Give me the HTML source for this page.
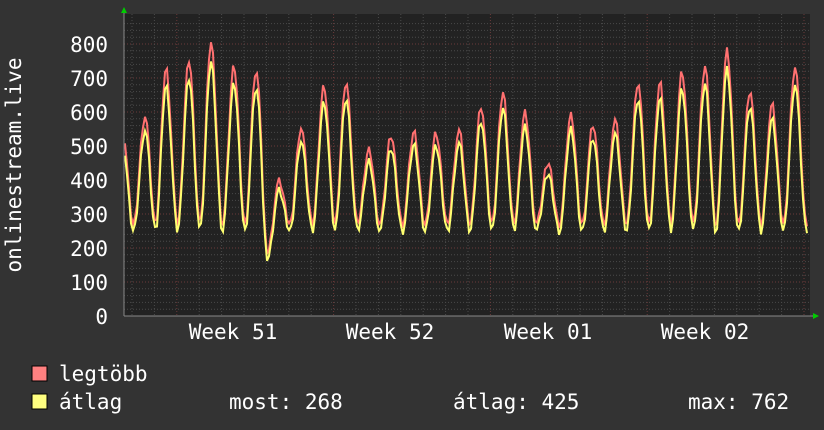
<!DOCTYPE html>
<html><head><meta charset="utf-8"><style>
html,body{margin:0;padding:0;background:#333;}
svg{display:block}
text{font-family:"DejaVu Sans Mono","Liberation Mono",monospace;font-size:21px;fill:#fff}
</style></head><body>
<svg id="s" width="824" height="430" xmlns="http://www.w3.org/2000/svg">
<rect width="824" height="430" fill="#333"/>
<rect x="124" y="14" width="686" height="302" fill="#222"/>
<g id="grid"></g>
<path id="red" fill="none" stroke="#ff7070" stroke-width="2"/>
<path id="yel" fill="none" stroke="#ffff70" stroke-width="2"/>
<line x1="124" y1="316" x2="816" y2="316" stroke="#888" stroke-width="1"/>
<line x1="124" y1="316" x2="124" y2="10" stroke="#888" stroke-width="1"/>
<polygon points="121,13 127,13 124,7" fill="#0c0"/>
<polygon points="813,313 813,319 819,316" fill="#0c0"/>
<g text-anchor="end">
<text x="108" y="52">800</text><text x="108" y="86">700</text><text x="108" y="120">600</text>
<text x="108" y="154">500</text><text x="108" y="188">400</text><text x="108" y="222">300</text>
<text x="108" y="256">200</text><text x="108" y="290">100</text><text x="108" y="324">0</text>
</g>
<text transform="translate(21,165) rotate(-90)" text-anchor="middle">onlinestream.live</text>
<g text-anchor="middle">
<text x="233" y="339">Week 51</text><text x="390" y="339">Week 52</text>
<text x="548" y="339">Week 01</text><text x="705" y="339">Week 02</text>
</g>
<rect x="32" y="366" width="15" height="15" fill="#ff8080" stroke="#000"/>
<rect x="32" y="394" width="15" height="15" fill="#ffff80" stroke="#000"/>
<text x="59" y="381">legtöbb</text>
<text x="59" y="409">átlag</text>
<text x="229" y="409">most: 268</text>
<text x="453" y="409">átlag: 425</text>
<text x="688" y="409">max: 762</text>
</svg>
<script>
(function(){
var g=document.getElementById('grid'),ns='http://www.w3.org/2000/svg',h='';
for(var v=20;v<=860;v+=20){var y=316-v*0.34;if(y<14)break;
 h+='<line x1="124" x2="810" y1="'+y+'" y2="'+y+'" stroke="'+(v%100==0?'#6a3a3a':'#4a4a4a')+'" stroke-dasharray="1,2" stroke-width="1"/>';}
for(var x=132;x<810;x+=22.4){var major=Math.abs(((x-132)/22.4)%7-2)<0.01;
 h+='<line y1="14" y2="316" x1="'+x.toFixed(1)+'" x2="'+x.toFixed(1)+'" stroke="'+(major?'#6a3a3a':'#4a4a4a')+'" stroke-dasharray="1,2" stroke-width="1"/>';}
g.innerHTML=h;
var pk=[[122,560],[145,590],[166,730],[189,755],[211,805],[234,735],[256,720],[279,395],[301,555],[324,680],[346,690],[369,490],[391,530],[414,540],[436,535],[459,545],[481,620],[503,660],[525,600],[548,450],[571,590],[593,560],[615,575],[638,690],[660,690],[682,720],[705,735],[727,780],[750,660],[772,620],[795,735],[818,600]];
function val(x,k){var i=0;while(i<pk.length-2&&pk[i+1][0]<x)i++;
 var a=pk[i],b=pk[i+1],t=(x-a[0])/(b[0]-a[0]);
 var tr=k?250:270; if(x>262&&x<280)tr=k?170:190;
 var ca=Math.pow(Math.max(0,Math.cos(Math.PI*t)),2),cb=Math.pow(Math.max(0,Math.cos(Math.PI*(1-t))),2);
 var pa=k?a[1]*0.93:a[1],pb=k?b[1]*0.93:b[1];
 var v=tr+(pa-tr)*ca+(pb-tr)*cb;
 v+=((x*7919)%13-6)*2;return v;}
function path(k){var d='';for(var x=125;x<=807;x+=2){var y=316-val(x,k)*0.34;d+=(x==125?'M':'L')+x+','+y.toFixed(1);}return d;}
document.getElementById('red').setAttribute('d',path(0));
document.getElementById('yel').setAttribute('d',path(1));
})();
</script>
</body></html>
